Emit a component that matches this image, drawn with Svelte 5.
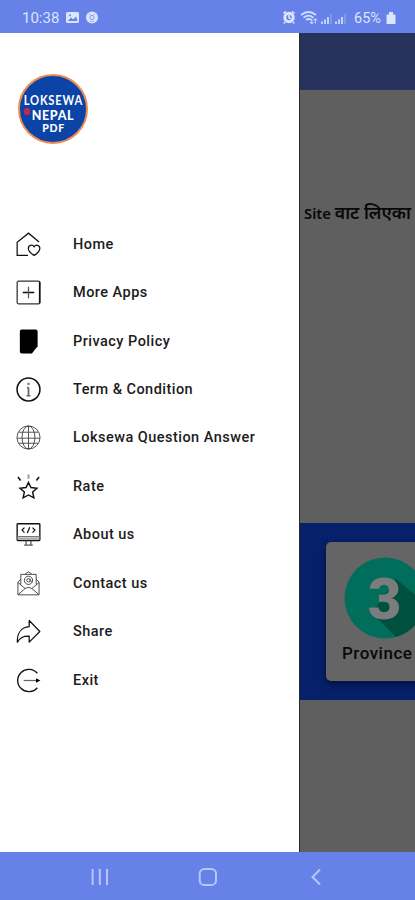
<script lang="ts">
  type IconName =
    | "home" | "plus" | "file" | "info" | "globe"
    | "star" | "monitor" | "mail" | "share" | "exit";

  interface MenuItem {
    label: string;
    icon: IconName;
  }

  const items: MenuItem[] = [
    { label: "Home", icon: "home" },
    { label: "More Apps", icon: "plus" },
    { label: "Privacy Policy", icon: "file" },
    { label: "Term & Condition", icon: "info" },
    { label: "Loksewa Question Answer", icon: "globe" },
    { label: "Rate", icon: "star" },
    { label: "About us", icon: "monitor" },
    { label: "Contact us", icon: "mail" },
    { label: "Share", icon: "share" },
    { label: "Exit", icon: "exit" },
  ];

  let selected = $state("");
</script>

{#snippet icon(name: IconName)}
  <svg class="icon" viewBox="0 0 26 26" fill="none" stroke="#111" stroke-width="1.3">
    {#if name === "home"}
      <path d="M24 10.5 13 1.2 1.2 10.6V24.4H12.5" />
      <path d="M18.8 24.3c-2.8-1.6-6-4-6-7.4a3.2 3.2 0 0 1 6-1.5 3.2 3.2 0 0 1 6 1.5c0 3.4-3.2 5.8-6 7.4z" />
    {:else if name === "plus"}
      <rect x="1.2" y="1.2" width="23.6" height="23.6" rx="1.5" stroke="#333" />
      <path d="M24.6 2V24" stroke-width="1.6" />
      <path d="M7 13H19" stroke-width="1.6" />
      <path d="M13 7V19" stroke="#555" stroke-width="1.3" />
    {:else if name === "file"}
      <path d="M6 .5H20.5q2 0 2 2V18l-6 7.5H6q-2 0-2-2V2.5q0-2 2-2z" fill="#000" stroke="none" />
    {:else if name === "info"}
      <circle cx="13" cy="13" r="11.9" stroke-width="1.6" />
      <path d="M13 11V19.5M11.5 11H13M11 19.5H15" stroke="#666" stroke-width="1.8" />
      <circle cx="13" cy="7.2" r="1.4" fill="#888" stroke="none" />
    {:else if name === "globe"}
      <g stroke="#444" stroke-width=".95">
        <circle cx="13" cy="13" r="12" />
        <ellipse cx="13" cy="13" rx="6.7" ry="12" />
        <path d="M13 1V25M1 13.7H25M3 7.5H23M3 19H23" />
      </g>
    {:else if name === "star"}
      <path d="M13 8.8 15.6 14.1 21.8 14.8 17.3 18.8 18.6 24.8 13 21.8 7.4 24.8 8.7 18.8 4.2 14.8 10.4 14.1z" stroke-width="1.5" />
      <path d="M2 3.2 4.8 6.8M24 3.2 21.2 6.8" stroke-width="1.6" />
      <path d="M13 .5V5" stroke="#999" stroke-width="2" />
    {:else if name === "monitor"}
      <rect x="1.2" y="1.8" width="23.6" height="17.4" rx=".8" stroke-width="1.4" />
      <path d="M1.2 15.2H24.8" stroke="#777" />
      <path d="M1.5 17.2H24.5" stroke="#aaa" stroke-width="2" />
      <path d="M10.5 19.5V23.5M15.5 19.5V23.5M8.5 24H17.5" stroke="#555" />
      <path d="M8.8 5.8 6.3 8.4 8.8 11M17.2 5.8 19.7 8.4 17.2 11M14.3 5.4 11.7 11.4" />
    {:else if name === "mail"}
      <g stroke="#444" stroke-width="1">
        <path d="M5 14V3.5H21V14M9.5 3.2 13 .8l3.5 2.4" />
        <path d="M5 8.5 2 11.5V24.8H24V11.5L21 8.5" />
        <path d="M2 12 9.5 18.2 2.3 24.5M24 12 16.5 18.2 23.7 24.5M9.5 18.2q3.5-2.6 7 0" />
        <circle cx="13" cy="9.7" r="4.3" />
        <circle cx="13" cy="9.7" r="1.8" />
        <path d="M14.8 8V10.2q1.2 2 2.4-.5" />
      </g>
    {:else if name === "share"}
      <path d="M13.7 1.6 24.8 13 13.7 24V17.8C7 17.7 4.1 19.5 1.4 24.2 1 15.2 5.2 8.8 13.7 8z" stroke-linejoin="round" />
    {:else}
      <path d="M22.2 5.5A11.6 11.6 0 1 0 22.2 20.5" stroke-width="1.4" />
      <path d="M8 13H22" stroke="#666" stroke-width="1.3" />
      <path d="M20.8 10.6 25.4 13 20.8 15.4z" fill="#000" stroke="none" />
    {/if}
  </svg>
{/snippet}

<div class="screen">
  <header class="status">
    <span class="clock">10:38</span>
    <svg class="notices" viewBox="0 0 34 14" width="34" height="14">
      <rect x="1" y="1" width="13" height="11" rx="1.5" fill="#dce4ff" />
      <path d="M3 10 6 6.5l2.2 2L11 5.5l1.6 4.5z" fill="#6881e7" />
      <circle cx="5" cy="4.2" r="1" fill="#6881e7" />
      <circle cx="27" cy="6.5" r="6" fill="#dce4ff" />
      <circle cx="27" cy="6.5" r="2.1" fill="none" stroke="#8497e9" />
      <path d="M24 3.4h1.5M28.5 3.4H30M25 10.2q2 1 4 0" stroke="#a0b0f0" fill="none" />
    </svg>
    <svg class="signals" viewBox="0 0 66 16" width="66" height="16">
      <circle cx="6" cy="7.5" r="4.2" fill="none" stroke="#dce4ff" stroke-width="3" />
      <path d="M6 4.8V7.8L8 8.9M.5 3.5 3 1.3M11.5 3.5 9 1.3M2 12 .8 13.5M10 12l1.2 1.5" stroke="#dce4ff" stroke-width="1.6" fill="none" />
      <path d="M18 5q7.5-6 15 0M20.5 7.6q5-4 10 0M23 10q2.5-2 5 0" stroke="#d2dcff" stroke-width="1.7" fill="none" />
      <path d="M28.8 8.5V13.5M27 12l1.8 2 1.8-2M32.3 13.5V9M30.6 10.5l1.7-2 1.7 2" stroke="#d2dcff" fill="none" />
      <g fill="#c3d0fd">
        <path d="M38 11.5h2v2.5H38zM41 9.5h2v4.5H41zM44 7h2V14H44z" />
        <path d="M52 11.5h2v2.5H52zM55 9.5h2v4.5H55zM58 7h2V14H58z" />
      </g>
      <path d="M48 4V14M62 4V14" stroke="#8da0f0" stroke-width="1.4" />
    </svg>
    <span class="percent">65%</span>
    <svg class="battery" viewBox="0 0 10 14" width="10" height="14">
      <path d="M3 1H7V3.5H8.5q1 0 1 1V12q0 1-1 1H1.5q-1 0-1-1V4.5q0-1 1-1H3z" fill="#dce4ff" />
    </svg>
  </header>

  <main>
    <aside class="drawer">
      <div class="brand">
        <div class="logo">
          <span class="line first">LOKSEWA</span>
          <span class="line second">NEPAL</span>
          <span class="line third">PDF</span>
          <i class="stamp"></i>
        </div>
      </div>
      <nav>
        {#each items as item}
          <button type="button" onclick={() => (selected = item.label)}>
            {@render icon(item.icon)}
            <span>{item.label}</span>
          </button>
        {/each}
      </nav>
    </aside>

    <section class="page">
      <div class="toolbar"></div>
      <p class="note">Site <span lang="ne">वाट लिएका</span></p>
      <div class="band">
        <div class="card">
          <svg class="badge" viewBox="0 0 82 82" width="82" height="82">
            <circle cx="41" cy="41" r="40.5" fill="#006e5a" />
            <path d="M28 56 52 80A40.5 40.5 0 0 0 81 46L52 22z" fill="#00503f" />
            <text x="40.5" y="62" text-anchor="middle">3</text>
          </svg>
          <span class="province">Province</span>
        </div>
      </div>
    </section>
  </main>

  <footer>
    <svg viewBox="0 0 415 48" width="415" height="48" fill="none" stroke="#b8c7fa" stroke-width="2">
      <path d="M92.6 17V33M99.8 17V33M107 17V33" />
      <rect x="199.7" y="17" width="16.3" height="16" rx="4.6" />
      <path d="M320 17.5 312.5 25 320 32.5" />
    </svg>
  </footer>
</div>

<style>
  :global(body) {
    margin: 0;
  }
  .screen {
    width: 415px;
    height: 900px;
    display: flex;
    flex-direction: column;
    overflow: hidden;
    background: #fff;
    font-family: Roboto, "Noto Sans", sans-serif;
  }
  .status {
    height: 33px;
    box-sizing: border-box;
    padding: 3px 19px 0 22px;
    flex: none;
    display: flex;
    align-items: center;
    background: #6681e8;
    color: #dce4ff;
    font-size: 15px;
  }
  .clock {
    width: 43px;
  }
  .signals {
    margin-left: auto;
    margin-right: 5px;
  }
  .percent {
    width: 32px;
    font-size: 14.5px;
  }
  main {
    flex: 1;
    min-height: 0;
    display: flex;
  }
  .drawer {
    width: 299px;
    flex: none;
    background: #fff;
  }
  .brand {
    height: 187px;
    box-sizing: border-box;
    padding: 41px 0 0 18px;
  }
  .logo {
    position: relative;
    width: 70px;
    height: 70px;
    box-sizing: border-box;
    padding-top: 17px;
    border: 2px solid #ee8a55;
    border-radius: 50%;
    background: #0b44a6;
    color: #fff;
    display: flex;
    flex-direction: column;
    align-items: center;
    font-family: Lato, sans-serif;
    font-weight: 900;
    white-space: nowrap;
  }
  .line {
    line-height: 15px;
  }
  .first {
    font-size: 13px;
    font-weight: 700;
    letter-spacing: 0.9px;
    transform: scaleX(0.86);
  }
  .second {
    font-size: 12.5px;
    letter-spacing: 0.6px;
  }
  .third {
    font-size: 10.5px;
    line-height: 11px;
    letter-spacing: 0.7px;
    margin-left: 1px;
  }
  .stamp {
    position: absolute;
    left: 4px;
    top: 32px;
    width: 6px;
    height: 7px;
    border-radius: 2px;
    background: #b92c50;
  }
  nav {
    display: flex;
    flex-direction: column;
  }
  button {
    height: 48.45px;
    padding: 0 0 0 16px;
    border: 0;
    background: none;
    display: flex;
    align-items: center;
    gap: 32px;
    color: #1c1c1c;
    font: 500 14.5px Roboto, sans-serif;
    letter-spacing: 0.47px;
    cursor: pointer;
  }
  .icon {
    width: 25px;
    height: 25px;
    flex: none;
  }
  .page {
    flex: 1;
    min-width: 0;
    overflow: hidden;
    border-left: 1px solid #292929;
    background: #5f5f5f;
    color: #080808;
  }
  .toolbar {
    height: 57px;
    background: #27335c;
  }
  .note {
    height: 433px;
    box-sizing: border-box;
    margin: 0;
    padding: 111px 0 0 4px;
    font: 600 14.8px/22px "Noto Sans", "Open Sans", sans-serif;
    white-space: nowrap;
  }
  .note span {
    font-size: 17.6px;
  }
  .band {
    height: 177px;
    box-sizing: border-box;
    padding: 19px 0 0 26px;
    background: #06216a;
  }
  .card {
    width: 118px;
    height: 139px;
    box-sizing: border-box;
    padding: 15px 0 0 17px;
    border-radius: 5px;
    background: #656565;
    box-shadow: 0 3px 7px #03103b;
    display: flex;
    flex-direction: column;
  }
  .badge {
    margin-left: 1px;
    flex: none;
  }
  .badge text {
    font: 900 58px Roboto, sans-serif;
    fill: #7c7c7c;
  }
  .province {
    margin-top: 3px;
    margin-left: -1px;
    font: 500 17px/22px Roboto, sans-serif;
    letter-spacing: 0.5px;
  }
  footer {
    height: 48px;
    flex: none;
    background: #6681e8;
  }
  footer svg {
    display: block;
  }
</style>
